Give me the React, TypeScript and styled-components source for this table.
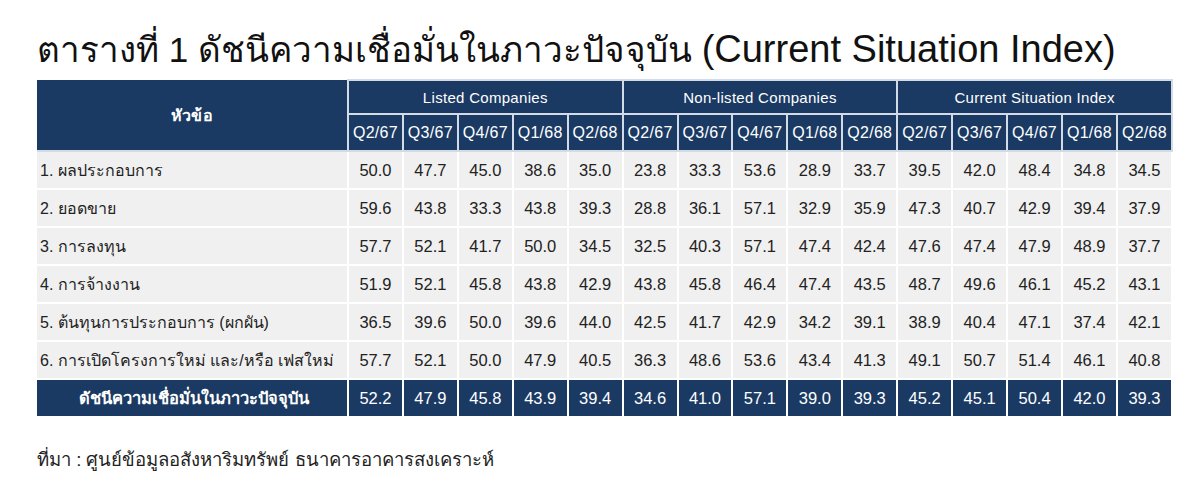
import React from 'react';
import styled, { createGlobalStyle } from 'styled-components';

const GlobalStyle = createGlobalStyle`
  html, body {
    margin: 0;
    padding: 0;
    background: #ffffff;
  }
  body {
    font-family: "Liberation Sans", "Noto Sans", "DejaVu Sans", sans-serif;
    color: #222222;
  }
`;

const Page = styled.div`
  width: 1200px;
  height: 496px;
  padding: 24px 0 0 37px;
  box-sizing: border-box;
  overflow: hidden;
`;

const Title = styled.h1`
  margin: 0 0 4px 0;
  font-size: 35px;
  font-weight: 400;
  line-height: 50px;
  color: #111111;
  white-space: nowrap;
`;

const Latin = styled.span`
  font-size: 38px;
`;

const Table = styled.table`
  border-collapse: collapse;
  table-layout: fixed;
  width: 1136px;
`;

const HeadCell = styled.th<{ $h: number; $size: number }>`
  background: #1b3a63;
  color: #ffffff;
  font-weight: 400;
  font-size: ${p => p.$size}px;
  height: ${p => p.$h}px;
  padding: 0;
  border: 2px solid #d3dbe6;
  text-align: center;
  white-space: nowrap;
  letter-spacing: 0.3px;
`;

const TopicHead = styled(HeadCell)`
  border-left: none;
  border-top: none;
  font-weight: 700;
`;

const Row = styled.tr``;

const LabelCell = styled.td<{ $total?: boolean }>`
  background: ${p => (p.$total ? '#1b3a63' : '#f0f0f0')};
  color: ${p => (p.$total ? '#ffffff' : '#222222')};
  font-weight: ${p => (p.$total ? 700 : 400)};
  text-align: ${p => (p.$total ? 'center' : 'left')};
  font-size: ${p => (p.$total ? 16.5 : 16)}px;
  height: 36px;
  padding: 0 0 0 3px;
  border: 2px solid #ffffff;
  border-left: none;
  white-space: nowrap;
`;

const ValueCell = styled.td<{ $total?: boolean }>`
  background: ${p => (p.$total ? '#1b3a63' : '#f0f0f0')};
  color: ${p => (p.$total ? '#ffffff' : '#222222')};
  font-size: 16.5px;
  text-align: center;
  padding: 0;
  border: 2px solid #ffffff;
  border-left-color: ${p => (p.$total ? '#d3dbe6' : '#ffffff')};
`;

const Source = styled.p`
  margin: 27px 0 0 0;
  font-size: 18.5px;
  color: #222222;
`;

const groups = ['Listed Companies', 'Non-listed Companies', 'Current Situation Index'];
const quarters = ['Q2/67', 'Q3/67', 'Q4/67', 'Q1/68', 'Q2/68'];

const rows: { label: string; values: string[] }[] = [
  { label: '1. ผลประกอบการ', values: ['50.0', '47.7', '45.0', '38.6', '35.0', '23.8', '33.3', '53.6', '28.9', '33.7', '39.5', '42.0', '48.4', '34.8', '34.5'] },
  { label: '2. ยอดขาย', values: ['59.6', '43.8', '33.3', '43.8', '39.3', '28.8', '36.1', '57.1', '32.9', '35.9', '47.3', '40.7', '42.9', '39.4', '37.9'] },
  { label: '3. การลงทุน', values: ['57.7', '52.1', '41.7', '50.0', '34.5', '32.5', '40.3', '57.1', '47.4', '42.4', '47.6', '47.4', '47.9', '48.9', '37.7'] },
  { label: '4. การจ้างงาน', values: ['51.9', '52.1', '45.8', '43.8', '42.9', '43.8', '45.8', '46.4', '47.4', '43.5', '48.7', '49.6', '46.1', '45.2', '43.1'] },
  { label: '5. ต้นทุนการประกอบการ (ผกผัน)', values: ['36.5', '39.6', '50.0', '39.6', '44.0', '42.5', '41.7', '42.9', '34.2', '39.1', '38.9', '40.4', '47.1', '37.4', '42.1'] },
  { label: '6. การเปิดโครงการใหม่ และ/หรือ เฟสใหม่', values: ['57.7', '52.1', '50.0', '47.9', '40.5', '36.3', '48.6', '53.6', '43.4', '41.3', '49.1', '50.7', '51.4', '46.1', '40.8'] },
];

const total = ['52.2', '47.9', '45.8', '43.9', '39.4', '34.6', '41.0', '57.1', '39.0', '39.3', '45.2', '45.1', '50.4', '42.0', '39.3'];

export default function App() {
  return (
    <>
      <GlobalStyle />
      <Page>
        <Title>
          ตารางที่ 1 ดัชนีความเชื่อมั่นในภาวะปัจจุบัน <Latin>(Current Situation Index)</Latin>
        </Title>
        <Table>
          <colgroup>
            <col style={{ width: 311 }} />
            {Array.from({ length: 15 }).map((_, i) => (
              <col key={i} />
            ))}
          </colgroup>
          <thead>
            <tr>
              <TopicHead $h={32} $size={16} rowSpan={2}>
                หัวข้อ
              </TopicHead>
              {groups.map(g => (
                <HeadCell $h={32} $size={15} key={g} colSpan={5}>
                  {g}
                </HeadCell>
              ))}
            </tr>
            <tr>
              {groups.map(g =>
                quarters.map(q => (
                  <HeadCell $h={35} $size={16} key={g + q}>
                    {q}
                  </HeadCell>
                ))
              )}
            </tr>
          </thead>
          <tbody>
            {rows.map(r => (
              <Row key={r.label}>
                <LabelCell>{r.label}</LabelCell>
                {r.values.map((v, i) => (
                  <ValueCell key={i}>{v}</ValueCell>
                ))}
              </Row>
            ))}
            <Row>
              <LabelCell $total>ดัชนีความเชื่อมั่นในภาวะปัจจุบัน</LabelCell>
              {total.map((v, i) => (
                <ValueCell $total key={i}>
                  {v}
                </ValueCell>
              ))}
            </Row>
          </tbody>
        </Table>
        <Source>ที่มา : ศูนย์ข้อมูลอสังหาริมทรัพย์ ธนาคารอาคารสงเคราะห์</Source>
      </Page>
    </>
  );
}
